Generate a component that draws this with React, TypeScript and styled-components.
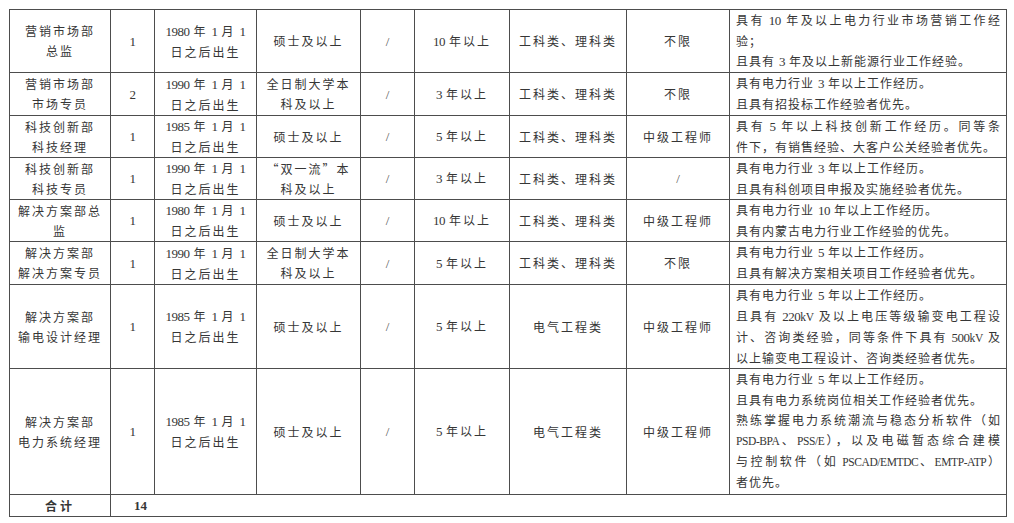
import styled, { createGlobalStyle } from "styled-components";

type ReqLine = { text: string; justify?: boolean };

type Post = {
  dept: string[];
  count: string;
  born: string[];
  edu: string[];
  age: string;
  years: string;
  major: string;
  title: string;
  req: ReqLine[];
  height: number;
};

const widths = [101, 44, 102, 104, 54, 95, 117, 103, 277];

const posts: Post[] = [
  {
    dept: ["营销市场部", "总监"],
    count: "1",
    born: ["1980 年 1 月 1", "日之后出生"],
    edu: ["硕士及以上"],
    age: "/",
    years: "10 年以上",
    major: "工科类、理科类",
    title: "不限",
    req: [
      { text: "具有 10 年及以上电力行业市场营销工作经", justify: true },
      { text: "验；" },
      { text: "且具有 3 年及以上新能源行业工作经验。" },
    ],
    height: 63,
  },
  {
    dept: ["营销市场部", "市场专员"],
    count: "2",
    born: ["1990 年 1 月 1", "日之后出生"],
    edu: ["全日制大学本", "科及以上"],
    age: "/",
    years: "3 年以上",
    major: "工科类、理科类",
    title: "不限",
    req: [
      { text: "具有电力行业 3 年以上工作经历。" },
      { text: "且具有招投标工作经验者优先。" },
    ],
    height: 43,
  },
  {
    dept: ["科技创新部", "科技经理"],
    count: "1",
    born: ["1985 年 1 月 1", "日之后出生"],
    edu: ["硕士及以上"],
    age: "/",
    years: "5 年以上",
    major: "工科类、理科类",
    title: "中级工程师",
    req: [
      { text: "具有 5 年以上科技创新工作经历。同等条", justify: true },
      { text: "件下，有销售经验、大客户公关经验者优先。" },
    ],
    height: 42,
  },
  {
    dept: ["科技创新部", "科技专员"],
    count: "1",
    born: ["1990 年 1 月 1", "日之后出生"],
    edu: ["“双一流”本", "科及以上"],
    age: "/",
    years: "3 年以上",
    major: "工科类、理科类",
    title: "/",
    req: [
      { text: "具有电力行业 3 年以上工作经历。" },
      { text: "且具有科创项目申报及实施经验者优先。" },
    ],
    height: 42,
  },
  {
    dept: ["解决方案部总", "监"],
    count: "1",
    born: ["1980 年 1 月 1", "日之后出生"],
    edu: ["硕士及以上"],
    age: "/",
    years: "10 年以上",
    major: "工科类、理科类",
    title: "中级工程师",
    req: [
      { text: "具有电力行业 10 年以上工作经历。" },
      { text: "具有内蒙古电力行业工作经验的优先。" },
    ],
    height: 42,
  },
  {
    dept: ["解决方案部", "解决方案专员"],
    count: "1",
    born: ["1990 年 1 月 1", "日之后出生"],
    edu: ["全日制大学本", "科及以上"],
    age: "/",
    years: "5 年以上",
    major: "工科类、理科类",
    title: "不限",
    req: [
      { text: "具有电力行业 5 年以上工作经历。" },
      { text: "且具有解决方案相关项目工作经验者优先。" },
    ],
    height: 43,
  },
  {
    dept: ["解决方案部", "输电设计经理"],
    count: "1",
    born: ["1985 年 1 月 1", "日之后出生"],
    edu: ["硕士及以上"],
    age: "/",
    years: "5 年以上",
    major: "电气工程类",
    title: "中级工程师",
    req: [
      { text: "具有电力行业 5 年以上工作经历。" },
      { text: "且具有 220kV 及以上电压等级输变电工程设", justify: true },
      { text: "计、咨询类经验，同等条件下具有 500kV 及", justify: true },
      { text: "以上输变电工程设计、咨询类经验者优先。" },
    ],
    height: 83,
  },
  {
    dept: ["解决方案部", "电力系统经理"],
    count: "1",
    born: ["1985 年 1 月 1", "日之后出生"],
    edu: ["硕士及以上"],
    age: "/",
    years: "5 年以上",
    major: "电气工程类",
    title: "中级工程师",
    req: [
      { text: "具有电力行业 5 年以上工作经历。" },
      { text: "且具有电力系统岗位相关工作经验者优先。" },
      { text: "熟练掌握电力系统潮流与稳态分析软件（如", justify: true },
      { text: "PSD-BPA、PSS/E），以及电磁暂态综合建模", justify: true },
      { text: "与控制软件（如 PSCAD/EMTDC、EMTP-ATP）", justify: true },
      { text: "者优先。" },
    ],
    height: 126,
  },
];

// Latin runs become spans; the spaces around them turn into margins so that
// justified lines spread between the characters, not at the spaces.
function Mixed({ text }: { text: string }) {
  const parts = text.split(/( ?[0-9]+ ?| ?[A-Za-z][A-Za-z\-/]* ?)/);
  return (
    <>
      {parts.map((part, i) => {
        if (i % 2 === 0) return part;
        const l = part.startsWith(" ");
        const r = part.endsWith(" ");
        const word = part.trim();
        return /[A-Za-z]/.test(word) ? (
          <Letters key={i} $l={l} $r={r}>
            {word}
          </Letters>
        ) : (
          <Digits key={i} $l={l} $r={r}>
            {word}
          </Digits>
        );
      })}
    </>
  );
}

function Lines({ lines }: { lines: string[] }) {
  return (
    <>
      {lines.map((line, i) => (
        <CenterLine key={i}>
          <Mixed text={line} />
        </CenterLine>
      ))}
    </>
  );
}

export default function App() {
  return (
    <Page>
      <GlobalStyle />
      <Table>
        <colgroup>
          {widths.map((w, i) => (
            <Col key={i} $w={w} />
          ))}
        </colgroup>
        <tbody>
          {posts.map((p, i) => (
            <Row key={i} $h={p.height}>
              <Cell>
                <Lines lines={p.dept} />
              </Cell>
              <Cell>
                <Lines lines={[p.count]} />
              </Cell>
              <Cell>
                <Lines lines={p.born} />
              </Cell>
              <Cell>
                <Lines lines={p.edu} />
              </Cell>
              <Cell>
                <Slash>{p.age}</Slash>
              </Cell>
              <Cell>
                <Lines lines={[p.years]} />
              </Cell>
              <Cell>
                <Lines lines={[p.major]} />
              </Cell>
              <Cell>
                {p.title === "/" ? <Slash>/</Slash> : <Lines lines={[p.title]} />}
              </Cell>
              <ReqCell>
                {p.req.map((r, j) => (
                  <ReqText key={j} $justify={r.justify}>
                    <Mixed text={r.text} />
                  </ReqText>
                ))}
              </ReqCell>
            </Row>
          ))}
          <Row $h={22}>
            <TotalLabel>合计</TotalLabel>
            <TotalCount colSpan={8}>14</TotalCount>
          </Row>
        </tbody>
      </Table>
    </Page>
  );
}

const GlobalStyle = createGlobalStyle`
  html, body {
    margin: 0;
    background: #ffffff;
  }
  body {
    font-family: "Noto Sans CJK SC", sans-serif;
    color: #363636;
  }
`;

const Page = styled.div`
  padding: 9px 0 0 9px;
`;

const Table = styled.table`
  border-collapse: collapse;
  table-layout: fixed;
  width: 998px;
  font-size: 12px;
  line-height: 20px;
`;

const Col = styled.col<{ $w: number }>`
  width: ${(p) => p.$w}px;
`;

const Row = styled.tr<{ $h: number }>`
  height: ${(p) => p.$h}px;
`;

const Cell = styled.td`
  border: 1px solid #4d4d4d;
  padding: 0;
  text-align: center;
  vertical-align: middle;
  letter-spacing: 2px;
  white-space: nowrap;
`;

const CenterLine = styled.div`
  display: block;
`;

const ReqCell = styled.td`
  border: 1px solid #4d4d4d;
  padding: 0 5px 0 6px;
  vertical-align: top;
  letter-spacing: 1px;
`;

const ReqText = styled.div<{ $justify?: boolean }>`
  text-align: ${(p) => (p.$justify ? "justify" : "left")};
  text-align-last: ${(p) => (p.$justify ? "justify" : "left")};
`;

const Digits = styled.span<{ $l: boolean; $r: boolean }>`
  font-family: "Liberation Serif", serif;
  font-size: 13px;
  letter-spacing: -0.5px;
  margin-left: ${(p) => (p.$l ? 4 : 0)}px;
  margin-right: ${(p) => (p.$r ? 4 : 0)}px;
`;

const Letters = styled.span<{ $l: boolean; $r: boolean }>`
  font-family: "Liberation Serif", serif;
  font-size: 11.5px;
  letter-spacing: -0.4px;
  margin-left: ${(p) => (p.$l ? 4 : 0)}px;
  margin-right: ${(p) => (p.$r ? 4 : 0)}px;
`;

const Slash = styled.span`
  font-family: "Liberation Serif", serif;
  font-size: 13px;
  color: #555555;
  letter-spacing: 0;
`;

const TotalLabel = styled.td`
  border: 1px solid #4d4d4d;
  padding: 0;
  text-align: center;
  vertical-align: middle;
  font-weight: 700;
  letter-spacing: 3px;
`;

const TotalCount = styled.td`
  border: 1px solid #4d4d4d;
  padding: 0 0 0 23px;
  vertical-align: middle;
  font-family: "Liberation Serif", serif;
  font-weight: 700;
  font-size: 13px;
`;
